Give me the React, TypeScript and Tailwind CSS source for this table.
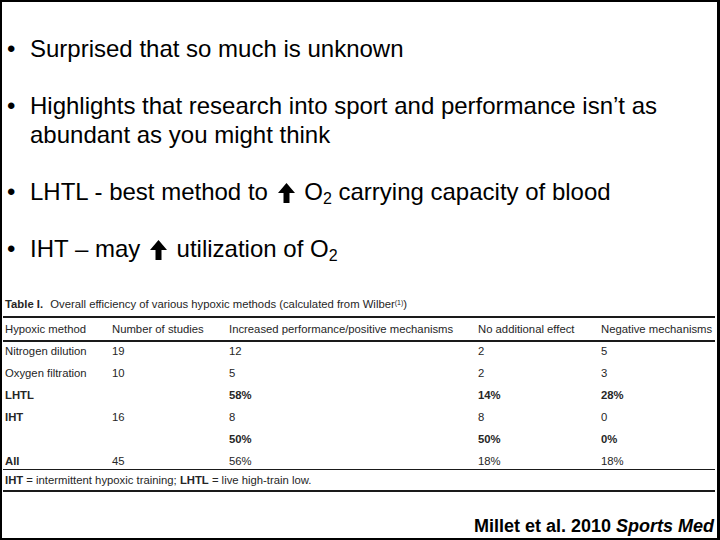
import React from "react";

// Up arrow used inside bullet text
const UpArrow = () => (
  <svg
    viewBox="0 0 17 20"
    className="inline-block w-[17px] h-[20px] align-[-3px] mx-[3px]"
    fill="currentColor"
  >
    <path d="M8.5 0 L17 10 L11.5 10 L11.5 20 L5.5 20 L5.5 10 L0 10 Z" />
  </svg>
);

const Bullet = ({ children }: { children: React.ReactNode }) => (
  <li className="flex">
    <span className="w-[23px] shrink-0">•</span>
    <span className="whitespace-nowrap">{children}</span>
  </li>
);

type Cell = { t: string; b?: boolean };

const rows: Cell[][] = [
  [{ t: "Nitrogen dilution" }, { t: "19" }, { t: "12" }, { t: "2" }, { t: "5" }],
  [{ t: "Oxygen filtration" }, { t: "10" }, { t: "5" }, { t: "2" }, { t: "3" }],
  [{ t: "LHTL", b: true }, { t: "" }, { t: "58%", b: true }, { t: "14%", b: true }, { t: "28%", b: true }],
  [{ t: "IHT", b: true }, { t: "16" }, { t: "8" }, { t: "8" }, { t: "0" }],
  [{ t: "" }, { t: "" }, { t: "50%", b: true }, { t: "50%", b: true }, { t: "0%", b: true }],
  [{ t: "All", b: true }, { t: "45" }, { t: "56%" }, { t: "18%" }, { t: "18%" }],
];

const headers = [
  "Hypoxic method",
  "Number of studies",
  "Increased performance/positive mechanisms",
  "No additional effect",
  "Negative mechanisms",
];

const colW = ["w-[107px]", "w-[117px]", "w-[249px]", "w-[123px]", "w-[116px]"];

export default function App() {
  return (
    <div className="w-[720px] h-[540px] bg-white border-black border-t-2 border-l-2 border-r-[3px] border-b-2 flex flex-col font-['Liberation_Sans',Arial,sans-serif] text-black overflow-hidden">
      {/* Bullet points */}
      <ul className="pt-[32px] pl-[5px] flex flex-col gap-[28px] text-[24px] leading-[29px]">
        <Bullet>Surprised that so much is unknown</Bullet>
        <Bullet>
          Highlights that research into sport and performance isn’t as
          <br />
          abundant as you might think
        </Bullet>
        <Bullet>
          LHTL - best method to <UpArrow /> O<sub className="text-[16px]">2</sub> carrying capacity of blood
        </Bullet>
        <Bullet>
          IHT – may <UpArrow /> utilization of O<sub className="text-[16px]">2</sub>
        </Bullet>
      </ul>

      {/* Table image */}
      <div className="mt-[34px] ml-px w-[712px] text-[11.3px] leading-[14px] text-[#262626]">
        <div className="pl-[2px] whitespace-nowrap">
          <b className="mr-[4px]">Table I.</b> Overall efficiency of various hypoxic methods (calculated from Wilber
          <sup className="text-[7px]">(1)</sup>)
        </div>
        <div className="mt-[5px] border-t-2 border-[#1a1a1a]" />
        <div className="flex pt-[4px] pb-[4px] border-b-2 border-[#1a1a1a]">
          {headers.map((h, i) => (
            <div key={i} className={`${colW[i]} pl-[2px] whitespace-nowrap`}>
              {h}
            </div>
          ))}
        </div>
        {rows.map((r, ri) => (
          <div
            key={ri}
            className={
              ri === rows.length - 1
                ? "flex pt-[2px] pb-px border-b border-[#1a1a1a]"
                : "flex pt-[2px] pb-[6px]"
            }
          >
            {r.map((c, ci) => (
              <div key={ci} className={`${colW[ci]} pl-[2px] whitespace-nowrap ${c.b ? "font-bold" : ""}`}>
                {c.t}
              </div>
            ))}
          </div>
        ))}
        <div className="pl-[2px] pt-[3px] pb-[3px] border-b-2 border-[#1a1a1a] whitespace-nowrap">
          <b>IHT</b> = intermittent hypoxic training; <b>LHTL</b> = live high-train low.
        </div>
      </div>

      {/* Citation */}
      <div className="mt-auto pr-[3px] pb-[2px] text-right text-[18px] leading-[20px] font-bold">
        Millet et al. 2010 <i>Sports Med</i>
      </div>
    </div>
  );
}
